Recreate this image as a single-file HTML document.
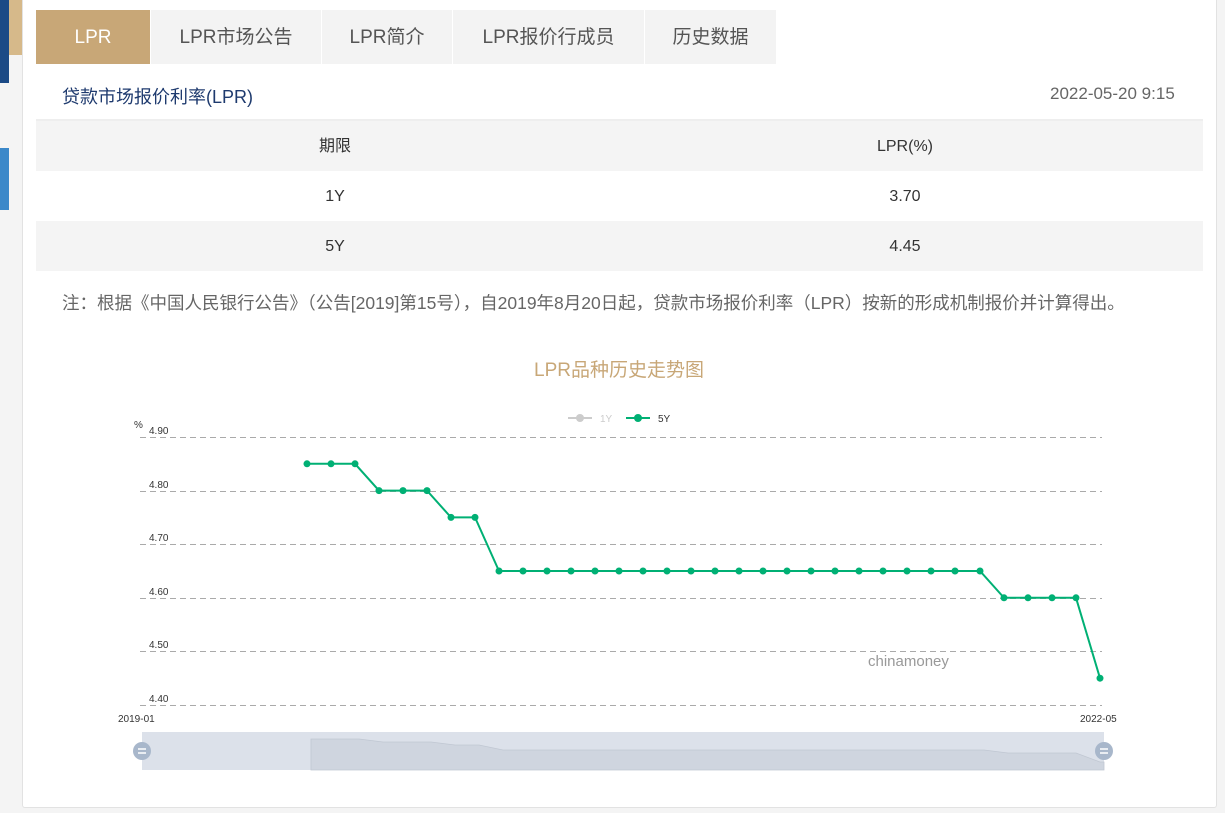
<!DOCTYPE html>
<html><head><meta charset="utf-8"><style>
*{margin:0;padding:0;box-sizing:border-box}
body{width:1225px;height:813px;background:#f4f4f4;position:relative;overflow:hidden;font-family:"Liberation Sans","Noto Sans CJK SC",sans-serif}
.card{position:absolute;left:22px;top:0;width:1195px;height:808px;background:#fff;border:1px solid #e2e2e2;border-top:none;border-radius:0 0 3px 3px}
.tab{position:absolute;top:10px;height:54px;line-height:56px;text-align:center;font-size:19px;color:#555;background:#f3f3f3}
.tab.on{background:#c8a777;color:#fff}
.t{position:absolute;font-size:18px}
.row{position:absolute;left:36px;width:1167px;height:50px;line-height:52px;font-size:16px;color:#333}
.row span{position:absolute;text-align:center}
</style></head><body>
<div style="position:absolute;left:0;top:0;width:9px;height:83px;background:#1b4a86"></div>
<div style="position:absolute;left:9px;top:0;width:13px;height:55px;background:#d6b98a"></div>
<div style="position:absolute;left:0;top:148px;width:9px;height:62px;background:#3b88c9"></div>
<div class="card"></div>
<div class="tab on" style="left:36px;width:114px">LPR</div>
<div class="tab" style="left:151px;width:170px">LPR市场公告</div>
<div class="tab" style="left:322px;width:130px">LPR简介</div>
<div class="tab" style="left:453px;width:191px">LPR报价行成员</div>
<div class="tab" style="left:645px;width:131px">历史数据</div>
<div class="t" style="left:62px;top:83px;color:#1e3a6e">贷款市场报价利率(LPR)</div>
<div class="t" style="left:1050px;top:84px;font-size:17px;color:#666">2022-05-20 9:15</div>
<div style="position:absolute;left:36px;top:119px;width:1167px;height:2px;background:#eee"></div>
<div class="row" style="top:121px;background:#f4f4f4"><span style="left:0;width:598px">期限</span><span style="left:598px;width:542px">LPR(%)</span></div>
<div class="row" style="top:171px"><span style="left:0;width:598px">1Y</span><span style="left:598px;width:542px">3.70</span></div>
<div class="row" style="top:221px;background:#f4f4f4"><span style="left:0;width:598px">5Y</span><span style="left:598px;width:542px">4.45</span></div>
<div class="t" style="left:62px;top:290px;font-size:17.5px;color:#666;white-space:nowrap">注：根据《中国人民银行公告》（公告[2019]第15号），自2019年8月20日起，贷款市场报价利率（LPR）按新的形成机制报价并计算得出。</div>
<div class="t" style="left:0;width:1238px;text-align:center;top:355px;color:#c8a777;font-size:19px">LPR品种历史走势图</div>
<svg style="position:absolute;left:0;top:0" width="1225" height="813" font-family="Liberation Sans, sans-serif">
<g stroke="#aaa" stroke-dasharray="6,4" stroke-width="1">
<line x1="140" y1="437.5" x2="1102" y2="437.5"/><line x1="140" y1="491.5" x2="1102" y2="491.5"/><line x1="140" y1="544.5" x2="1102" y2="544.5"/><line x1="140" y1="598.5" x2="1102" y2="598.5"/><line x1="140" y1="651.5" x2="1102" y2="651.5"/><line x1="140" y1="705.5" x2="1102" y2="705.5"/></g>
<g font-size="10" fill="#333"><text x="134" y="428">%</text><text x="149" y="434">4.90</text><text x="149" y="488">4.80</text><text x="149" y="541">4.70</text><text x="149" y="595">4.60</text><text x="149" y="648">4.50</text><text x="149" y="702">4.40</text>
<text x="118" y="722">2019-01</text><text x="1080" y="722">2022-05</text></g>
<line x1="568" y1="418" x2="592" y2="418" stroke="#ccc" stroke-width="2"/><circle cx="580" cy="418" r="4" fill="#ccc"/><text x="600" y="422" font-size="10" fill="#ccc">1Y</text>
<line x1="626" y1="418" x2="650" y2="418" stroke="#00b074" stroke-width="2"/><circle cx="638" cy="418" r="4" fill="#00b074"/><text x="658" y="422" font-size="10" fill="#333">5Y</text>
<text x="868" y="666" font-size="15" fill="#999">chinamoney</text>
<polyline fill="none" stroke="#00b074" stroke-width="2" points="307,463.8 355,463.8 379,490.6 427,490.6 451,517.4 475,517.4 499,571 980,571 1004,597.8 1076,597.8 1100,678.2"/>
<g fill="#00b074">
<circle cx="307" cy="463.8" r="3.5"/><circle cx="331" cy="463.8" r="3.5"/><circle cx="355" cy="463.8" r="3.5"/>
<circle cx="379" cy="490.6" r="3.5"/><circle cx="403" cy="490.6" r="3.5"/><circle cx="427" cy="490.6" r="3.5"/>
<circle cx="451" cy="517.4" r="3.5"/><circle cx="475" cy="517.4" r="3.5"/>
<circle cx="499" cy="571" r="3.5"/><circle cx="523" cy="571" r="3.5"/><circle cx="547" cy="571" r="3.5"/><circle cx="571" cy="571" r="3.5"/><circle cx="595" cy="571" r="3.5"/><circle cx="619" cy="571" r="3.5"/><circle cx="643" cy="571" r="3.5"/><circle cx="667" cy="571" r="3.5"/><circle cx="691" cy="571" r="3.5"/><circle cx="715" cy="571" r="3.5"/><circle cx="739" cy="571" r="3.5"/><circle cx="763" cy="571" r="3.5"/><circle cx="787" cy="571" r="3.5"/><circle cx="811" cy="571" r="3.5"/><circle cx="835" cy="571" r="3.5"/><circle cx="859" cy="571" r="3.5"/><circle cx="883" cy="571" r="3.5"/><circle cx="907" cy="571" r="3.5"/><circle cx="931" cy="571" r="3.5"/><circle cx="955" cy="571" r="3.5"/><circle cx="980" cy="571" r="3.5"/>
<circle cx="1004" cy="597.8" r="3.5"/><circle cx="1028" cy="597.8" r="3.5"/><circle cx="1052" cy="597.8" r="3.5"/><circle cx="1076" cy="597.8" r="3.5"/>
<circle cx="1100" cy="678.2" r="3.5"/></g>
<rect x="142" y="732" width="962" height="38" fill="#dce1ea"/>
<path d="M311,770 L311,739 L359,739 L383,742 L431,742 L455,745 L479,745 L503,750 L984,750 L1008,753 L1076,753 L1100,762 L1104,762 L1104,770 Z" fill="#cfd5df" stroke="#c0c7d2" stroke-width="0.8"/>
<circle cx="142" cy="751" r="9" fill="#a8b7cb"/><circle cx="1104" cy="751" r="9" fill="#a8b7cb"/>
<g stroke="#fff" stroke-width="1.5"><line x1="138" y1="749" x2="146" y2="749"/><line x1="138" y1="753" x2="146" y2="753"/><line x1="1100" y1="749" x2="1108" y2="749"/><line x1="1100" y1="753" x2="1108" y2="753"/></g>
</svg>
</body></html>
